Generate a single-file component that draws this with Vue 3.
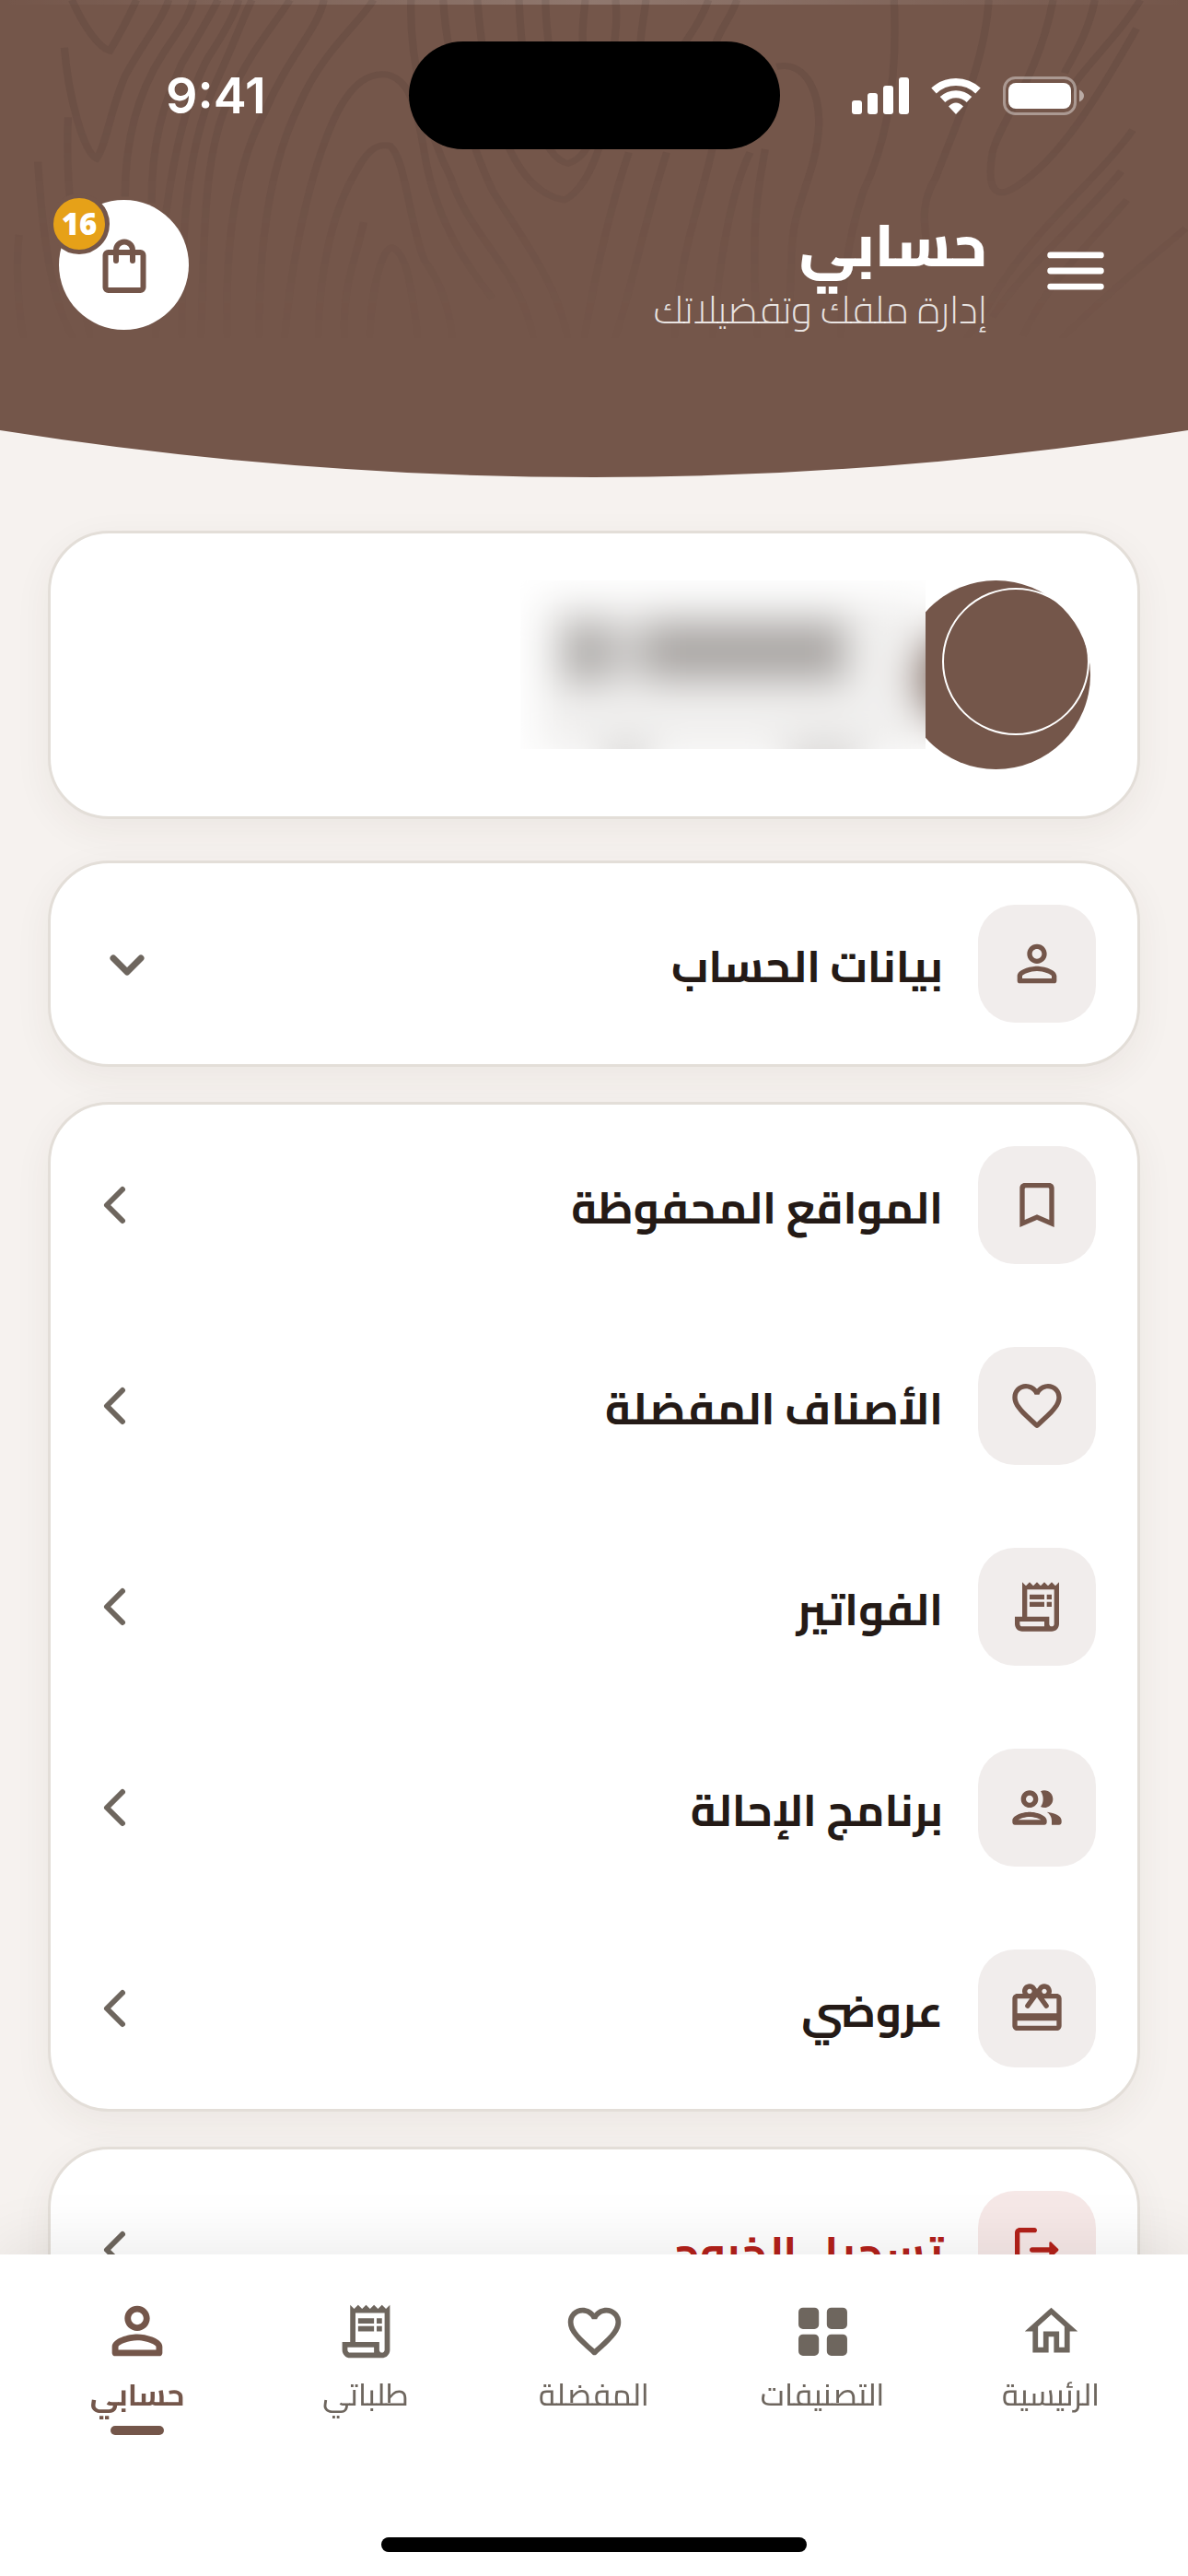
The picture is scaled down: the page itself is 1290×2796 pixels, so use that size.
<script setup>
import { ref } from "vue";

const cartCount = ref(16);
const activeTab = ref("account");
const detailsOpen = ref(false);

const icons = {
    person: "M12 4C9.79 4 8 5.79 8 8s1.79 4 4 4 4-1.79 4-4-1.79-4-4-4zm0 6c-1.1 0-2-.9-2-2s.9-2 2-2 2 .9 2 2-.9 2-2 2zm0 3c-2.67 0-8 1.34-8 4v2c0 .55.45 1 1 1h14c.55 0 1-.45 1-1v-2c0-2.66-5.33-4-8-4zm6 5H6v-.99c.2-.72 3.3-2.01 6-2.01s5.8 1.29 6 2v1z",
    bookmark: "M17 3H7c-1.1 0-2 .9-2 2v16l7-3 7 3V5c0-1.1-.9-2-2-2zm0 15l-5-2.18L7 18V5.500c0-.28.22-.5.5-.5h9c.28 0 .5.22.5.5V18z",
    heart: "M16.5 3c-1.74 0-3.41.81-4.5 2.09C10.91 3.81 9.24 3 7.5 3 4.42 3 2 5.42 2 8.500c0 3.78 3.4 6.86 8.55 11.54l.77.7c.38.34.98.34 1.36 0l.77-.71C18.6 15.36 22 12.28 22 8.500 22 5.42 19.58 3 16.5 3zm-4.4 15.55l-.1.1-.1-.1C7.14 14.24 4 11.39 4 8.500 4 6.500 5.500 5 7.500 5c1.54 0 3.04.99 3.57 2.36h1.87C13.46 5.99 14.96 5 16.500 5c2 0 3.500 1.500 3.500 3.500 0 2.89-3.14 5.74-7.9 10.05z",
    receipt: "M19.5 3.5L18 2l-1.5 1.5L15 2l-1.5 1.5L12 2l-1.5 1.5L9 2 7.5 3.5 6 2v14H3v3c0 1.66 1.34 3 3 3h12c1.66 0 3-1.34 3-3V2l-1.5 1.5zM15 20H6c-.55 0-1-.45-1-1v-1h10v2zm4-1c0 .55-.45 1-1 1s-1-.45-1-1v-3H8V5h11v14zM9 7h6v2H9zM16 7h2v2h-2zM9 10h6v2H9zM16 10h2v2h-2z",
    group: "M9 13.75c-2.34 0-7 1.17-7 3.5V18c0 .55.45 1 1 1h12c.55 0 1-.45 1-1v-.75c0-2.33-4.66-3.5-7-3.5zM4.34 17c.84-.58 2.87-1.25 4.66-1.25s3.82.67 4.66 1.25H4.34zM9 12c1.93 0 3.5-1.57 3.5-3.5S10.93 5 9 5 5.5 6.57 5.5 8.5 7.07 12 9 12zm0-5c.83 0 1.5.67 1.5 1.5S9.83 10 9 10s-1.5-.67-1.5-1.5S8.17 7 9 7zm7.04 6.81c1.16.84 1.96 1.96 1.96 3.44V19h3c.55 0 1-.45 1-1v-.75c0-2.02-3.5-3.17-5.96-3.44zM15 12c1.93 0 3.5-1.57 3.5-3.5S16.93 5 15 5c-.54 0-1.04.13-1.5.35.63.89 1 1.98 1 3.15s-.37 2.26-1 3.15c.46.22.96.35 1.5.35z",
    gift: "M20 6h-2.18c.11-.31.18-.65.18-1 0-1.66-1.34-3-3-3-1.05 0-1.96.54-2.5 1.35l-.5.67-.5-.68C10.96 2.54 10.05 2 9 2 7.34 2 6 3.34 6 5c0 .35.07.69.18 1H4c-1.11 0-1.99.89-1.99 2L2 19c0 1.11.89 2 2 2h16c1.11 0 2-.89 2-2V8c0-1.11-.89-2-2-2zm-5-2c.55 0 1 .45 1 1s-.45 1-1 1-1-.45-1-1 .45-1 1-1zM9 4c.55 0 1 .45 1 1s-.45 1-1 1-1-.45-1-1 .45-1 1-1zm11 15H4v-2h16v2zm0-5H4V8h5.08L7.400 10.300a1 1 0 0 0 1.600 1.200L12 7.400l3 4.100a1 1 0 0 0 1.600-1.200L14.920 8H20v6z",
    logout: "M5 5h6c.55 0 1-.45 1-1s-.45-1-1-1H5c-1.1 0-2 .9-2 2v14c0 1.1.9 2 2 2h6c.55 0 1-.45 1-1s-.45-1-1-1H5V5zM20.65 11.65l-2.79-2.79c-.32-.32-.86-.1-.86.35V11h-7c-.55 0-1 .45-1 1s.45 1 1 1h7v1.79c0 .45.54.67.85.35l2.79-2.79c.2-.19.2-.51.01-.7z",
    home: "M12 5.69l5 4.5V18h-2v-6H9v6H7v-7.81l5-4.5M12 3L2 12h3v8h6v-6h2v6h6v-8h3L12 3z",
    grid: "M4.500 3h4.300a1.700 1.700 0 0 1 1.700 1.700v4.700a1.700 1.700 0 0 1-1.700 1.700h-4.300a1.700 1.700 0 0 1-1.700-1.700V4.700A1.700 1.700 0 0 1 4.500 3zM15.200 3h4.300a1.700 1.700 0 0 1 1.700 1.700v4.700a1.700 1.700 0 0 1-1.700 1.700h-4.300a1.700 1.700 0 0 1-1.700-1.700V4.700A1.700 1.700 0 0 1 15.200 3zM4.500 13.100h4.300a1.700 1.700 0 0 1 1.700 1.700v4.700a1.700 1.700 0 0 1-1.700 1.700h-4.300a1.700 1.700 0 0 1-1.700-1.700v-4.700a1.700 1.700 0 0 1 1.700-1.700zM15.200 13.100h4.300a1.700 1.700 0 0 1 1.700 1.700v4.700a1.700 1.700 0 0 1-1.700 1.700h-4.300a1.700 1.700 0 0 1-1.700-1.700v-4.700a1.700 1.700 0 0 1 1.700-1.700z",
};

const menu = [
    { label: "المواقع المحفوظة", icon: "bookmark" },
    { label: "الأصناف المفضلة", icon: "heart" },
    { label: "الفواتير", icon: "receipt" },
    { label: "برنامج الإحالة", icon: "group" },
    { label: "عروضي", icon: "gift" },
];

const tabs = [
    { id: "home", label: "الرئيسية", icon: "home" },
    { id: "categories", label: "التصنيفات", icon: "grid" },
    { id: "favourites", label: "المفضلة", icon: "heart" },
    { id: "orders", label: "طلباتي", icon: "receipt" },
    { id: "account", label: "حسابي", icon: "person" },
];

// wood grain lines of the header
const grain = [
    "M190 0C220 80 260 150 290 160C310 120 345 40 360 0",
    "M170 150C180 300 220 480 255 500C280 460 290 350 330 240C380 130 430 60 445 0",
    "M180 370C170 600 200 800 240 1080",
    "M100 510C110 700 130 950 200 1080",
    "M50 740C40 850 50 1000 65 1080",
    "M330 620C330 420 370 280 430 170C480 80 500 50 510 0",
    "M400 640C400 450 430 330 480 200C540 80 560 40 575 0",
    "M410 1080C420 800 450 400 550 180C600 90 620 40 630 0",
    "M480 1080C480 800 480 500 570 260C620 130 640 60 665 0",
    "M530 1080C540 800 530 480 610 300C660 160 730 70 765 0",
    "M600 1080C590 700 640 480 700 350C760 180 840 90 855 0",
    "M685 1080C680 750 720 500 790 330C850 160 960 60 985 0",
    "M750 1080C770 800 820 540 880 380C930 250 980 230 1020 235C1080 250 1100 330 1120 480C1150 700 1240 850 1300 940",
    "M840 1080C840 850 880 660 940 540C980 450 1010 455 1030 460C1070 500 1080 700 1120 820C1170 900 1190 1000 1195 1080",
    "M910 1080C900 900 940 820 960 700",
    "M975 1080C980 900 1010 780 1035 780C1080 800 1090 950 1105 1080",
    "M1085 0C1080 200 1130 420 1190 560C1240 750 1380 850 1410 1080",
    "M1170 0C1180 200 1240 450 1300 600C1360 720 1480 900 1500 1080",
    "M1260 0C1280 300 1340 600 1490 630C1540 600 1580 500 1600 380",
    "M1370 0C1380 300 1430 500 1500 515C1540 500 1560 450 1570 400",
    "M1440 0C1440 60 1445 100 1450 160",
    "M1545 0C1540 60 1535 100 1540 160",
    "M1625 0C1630 60 1625 100 1620 160",
    "M1705 0C1700 60 1690 100 1690 160",
    "M1870 0C1840 100 1800 130 1790 180",
    "M1945 0C1930 60 1890 100 1880 180",
    "M1660 480C1620 620 1580 800 1540 1080",
    "M1760 480C1700 700 1670 900 1620 1080",
    "M1880 470C1850 640 1790 800 1780 1080",
    "M1980 480C1930 600 1900 800 1880 1080",
    "M2020 470C2000 600 1980 700 2000 1080",
    "M2050 210C2130 190 2170 300 2160 420C2150 560 2090 650 2090 800L2080 1080",
    "M2360 0C2370 250 2340 450 2280 600C2240 740 2220 900 2220 1080",
    "M2610 0C2600 200 2520 400 2470 560C2430 640 2440 700 2445 760",
    "M2780 0C2740 250 2640 380 2620 480C2600 620 2640 620 2680 590C2800 500 2900 300 3000 90",
    "M2890 0C2870 120 2820 200 2810 230",
    "M3010 0C2950 120 2850 220 2800 330",
    "M2990 410C2900 560 2750 700 2640 900C2600 980 2560 1060 2540 1080",
    "M2960 540C2850 700 2700 850 2620 1000",
    "M2975 630C2850 800 2760 900 2700 1060",
    "M3130 720C3000 850 2900 950 2800 1070",
];
</script>

<template>
    <div class="screen" dir="rtl">
        <header class="header">
            <svg class="grain" viewBox="0 0 3136 1080" preserveAspectRatio="none" aria-hidden="true">
                <path v-for="line in grain" :key="line" :d="line" />
            </svg>
            <svg class="curve" viewBox="0 0 1290 51" preserveAspectRatio="none" aria-hidden="true">
                <path d="M0 0Q645 102 1290 0Z" />
            </svg>

            <div class="status" dir="ltr">
                <span class="time">9:41</span>
                <div class="island"></div>
                <div class="signals">
                    <svg width="62" height="42" viewBox="0 0 62 42">
                        <rect x="0" y="26" width="11" height="15" rx="3" />
                        <rect x="17" y="18" width="11" height="23" rx="3" />
                        <rect x="34" y="10" width="11" height="31" rx="3" />
                        <rect x="51" y="1" width="11" height="40" rx="3" />
                    </svg>
                    <svg width="54" height="42" viewBox="0 0 54 42">
                        <g class="waves">
                            <path d="M3 15.500A35 35 0 0 1 51 15.500" />
                            <path d="M12.500 25A21 21 0 0 1 41.500 25" />
                        </g>
                        <path d="M27 41L19 32.500Q27 24.500 35 32.500Z" />
                    </svg>
                    <svg width="88" height="42" viewBox="0 0 88 42">
                        <rect class="shell" x="1.500" y="1.500" width="77" height="39" rx="12" />
                        <rect x="6" y="7" width="68" height="28" rx="8" />
                        <path class="cap" d="M83 14.500Q88 17 88 21T83 27.500Z" />
                    </svg>
                </div>
            </div>

            <div class="toolbar">
                <button class="menu-button" aria-label="القائمة">
                    <svg viewBox="0 0 24 24"><path d="M4 7h16M4 12h16M4 17h16" /></svg>
                </button>
                <div class="heading">
                    <h1>حسابي</h1>
                    <p>إدارة ملفك وتفضيلاتك</p>
                </div>
                <button class="cart" aria-label="السلة">
                    <svg viewBox="0 0 70 70">
                        <rect x="14.500" y="21" width="41" height="41" rx="3" />
                        <path d="M26 30V18.500a9 9 0 0 1 18 0V30" />
                    </svg>
                    <span class="badge">{{ cartCount }}</span>
                </button>
            </div>
        </header>

        <main class="content">
            <section class="card profile">
                <svg class="avatar" viewBox="0 0 205 205" aria-hidden="true">
                    <circle class="disc" cx="102.500" cy="102.500" r="102.500" />
                    <circle class="ring" cx="124" cy="88" r="79" />
                </svg>
                <svg class="hidden-name" viewBox="0 0 440 183" aria-hidden="true">
                    <defs>
                        <filter id="soft" x="-50%" y="-100%" width="200%" height="300%">
                            <feGaussianBlur stdDeviation="21" />
                        </filter>
                    </defs>
                    <rect class="paper" width="440" height="183" />
                    <g filter="url(#soft)">
                        <rect x="20" y="20" width="420" height="170" fill="#f1f0ef" />
                        <rect x="44" y="42" width="52" height="72" fill="#b0adab" />
                        <rect x="96" y="46" width="40" height="64" fill="#cfcdcc" />
                        <rect x="136" y="42" width="220" height="70" fill="#aca8a6" />
                        <rect x="90" y="170" width="50" height="50" fill="#dddbda" />
                        <rect x="290" y="170" width="80" height="50" fill="#dddbda" />
                        <ellipse cx="476" cy="106" rx="50" ry="56" fill="#8c7368" />
                    </g>
                </svg>
            </section>

            <section class="card details">
                <button class="row" :aria-expanded="detailsOpen" @click="detailsOpen = !detailsOpen">
                    <span class="tile"><svg viewBox="0 0 24 24"><path :d="icons.person" /></svg></span>
                    <span class="label">بيانات الحساب</span>
                    <svg class="down" viewBox="0 0 75 75"><path d="M23 31l15 15 15-15" /></svg>
                </button>
            </section>

            <nav class="card">
                <a v-for="item in menu" :key="item.icon" class="row" href="#">
                    <span class="tile"><svg viewBox="0 0 24 24"><path :d="icons[item.icon]" /></svg></span>
                    <span class="label">{{ item.label }}</span>
                    <svg class="chevron" viewBox="0 0 48 48"><path d="M33 7L16 24l17 17" /></svg>
                </a>
            </nav>

            <section class="card">
                <button class="row danger">
                    <span class="tile"><svg viewBox="0 0 24 24"><path :d="icons.logout" /></svg></span>
                    <span class="label">تسجيل الخروج</span>
                    <svg class="chevron" viewBox="0 0 48 48"><path d="M33 7L16 24l17 17" /></svg>
                </button>
            </section>
        </main>

        <nav class="tabbar">
            <div class="tabs">
                <a
                    v-for="tab in tabs"
                    :key="tab.id"
                    href="#"
                    class="tab"
                    :class="{ active: tab.id === activeTab }"
                    @click.prevent="activeTab = tab.id"
                >
                    <span class="tab-icon"><svg viewBox="0 0 24 24"><path :d="icons[tab.icon]" /></svg></span>
                    <span class="tab-label">{{ tab.label }}</span>
                </a>
            </div>
            <div class="home-indicator"></div>
        </nav>
    </div>
</template>

<style>
body {
  margin: 0;
  background-color: #f6f2ef;
}
</style>

<style scoped>
.screen {
  height: 100vh;
  overflow: hidden;
  background-color: #f6f2ef;
  font-family: Cairo, "DejaVu Sans Condensed", "DejaVu Sans", sans-serif;
  color: #241a16;
}

button {
  border: none;
  background: none;
  padding: 0;
  font: inherit;
  color: inherit;
  cursor: pointer;
}

a {
  color: inherit;
  text-decoration: none;
}

svg {
  display: block;
  flex-shrink: 0;
}

.header {
  position: relative;
  height: 467px;
  margin-bottom: 109px;
  background-color: #74564a;
  color: white;
}

.header::before {
  content: "";
  position: absolute;
  top: 0;
  width: 100%;
  height: 5px;
  background: linear-gradient(to right, transparent, rgba(255, 255, 255, 0.2), transparent);
}

.grain {
  position: absolute;
  top: 0;
  width: 100%;
  height: 372px;
  fill: none;
  stroke: rgba(40, 30, 26, 0.1);
  stroke-width: 20px;
  mask-image: linear-gradient(black 30%, transparent);
}

.curve {
  position: absolute;
  top: 100%;
  width: 100%;
  height: 51px;
  fill: #74564a;
}

.status {
  position: relative;
  display: grid;
  grid-template-columns: 1fr 403px 1fr;
  align-items: center;
  padding-top: 45px;
}

.time {
  padding-left: 180px;
  font-family: Inter, sans-serif;
  font-size: 54px;
  font-weight: 600;
}

.island {
  height: 117px;
  border-radius: 59px;
  background-color: black;
}

.signals {
  display: flex;
  justify-content: flex-end;
  gap: 24px;
  padding-right: 113px;
  fill: white;
}

.waves {
  fill: none;
  stroke: white;
  stroke-width: 8px;
}

.shell {
  fill: none;
  stroke: rgba(255, 255, 255, 0.4);
  stroke-width: 3px;
}

.cap {
  fill: rgba(255, 255, 255, 0.5);
}

.toolbar {
  position: relative;
  display: flex;
  align-items: flex-start;
  padding: 55px 81px 0 64px;
}

.menu-button {
  padding-top: 36px;
}

.menu-button svg {
  width: 82px;
  height: 82px;
  fill: none;
  stroke: white;
  stroke-width: 2;
  stroke-linecap: round;
}

.heading {
  flex: 1;
  margin-right: 55px;
}

h1 {
  margin: 0;
  font-size: 64px;
  font-weight: 800;
  line-height: 98px;
}

.heading p {
  margin: 0;
  font-size: 42px;
  font-weight: 300;
  line-height: 42px;
  color: rgba(255, 255, 255, 0.85);
}

.cart {
  position: relative;
  display: flex;
  align-items: center;
  justify-content: center;
  width: 141px;
  height: 141px;
  border-radius: 50%;
  background-color: white;
}

.cart svg {
  width: 70px;
  height: 70px;
  fill: none;
  stroke: #74564a;
  stroke-width: 6;
  stroke-linecap: round;
}

.badge {
  position: absolute;
  top: -7px;
  left: -11px;
  width: 56px;
  height: 56px;
  border: 5px solid #74564a;
  border-radius: 50%;
  background-color: #e6a118;
  color: white;
  font-family: "Open Sans", sans-serif;
  font-size: 33px;
  font-weight: 800;
  line-height: 56px;
  text-align: center;
}

.content {
  display: flex;
  flex-direction: column;
  gap: 38px;
  padding: 0 52px;
}

.card {
  border: 3px solid #e3ded8;
  border-radius: 66px;
  background-color: white;
  box-shadow: 0 12px 42px rgba(60, 50, 40, 0.06);
}

.profile {
  display: flex;
  padding: 51px;
  margin-bottom: 7px;
}

.avatar {
  width: 205px;
  height: 205px;
}

.disc {
  fill: #74564a;
}

.ring {
  fill: none;
  stroke: white;
  stroke-width: 2;
}

.hidden-name {
  z-index: 1;
  width: 440px;
  height: 183px;
  margin-right: -26px;
}

.paper {
  fill: white;
}

.row {
  display: flex;
  align-items: center;
  width: 100%;
  box-sizing: border-box;
  padding: 45px;
  text-align: right;
}

.tile {
  display: flex;
  align-items: center;
  justify-content: center;
  width: 128px;
  height: 128px;
  border-radius: 40px;
  background-color: #f1edec;
}

.tile svg {
  width: 64px;
  height: 64px;
  fill: #74564a;
}

.label {
  flex: 1;
  margin-right: 38px;
  padding-top: 4px;
  font-size: 48px;
  font-weight: 700;
  line-height: 90px;
}

.chevron,
.down {
  width: 48px;
  height: 48px;
  fill: none;
  stroke: #6e665e;
  stroke-width: 6;
  stroke-linecap: round;
  stroke-linejoin: round;
}

.down {
  width: 75px;
  height: 75px;
  stroke-width: 7;
}

.danger {
  color: #b3211a;
}

.danger .tile {
  background-color: #f6e8e7;
}

.danger .tile svg {
  fill: #b3211a;
}

.tabbar {
  position: fixed;
  bottom: 0;
  left: 0;
  right: 0;
  z-index: 2;
  display: flex;
  flex-direction: column;
  justify-content: space-between;
  align-items: center;
  height: 349px;
  background-color: white;
  box-shadow: 0 -12px 60px rgba(0, 0, 0, 0.08);
}

.tabs {
  display: grid;
  grid-template-columns: repeat(5, 1fr);
  width: 100%;
  box-sizing: border-box;
  padding: 41px 25px 0;
}

.tab {
  display: flex;
  flex-direction: column;
  align-items: center;
  color: #6e665e;
}

.tab-icon {
  display: flex;
  align-items: center;
  height: 84px;
}

.tab-icon svg {
  width: 69px;
  height: 69px;
  fill: currentColor;
}

.tab-label {
  font-size: 33px;
  font-weight: 500;
  line-height: 54px;
}

.active {
  color: #74564a;
}

.active .tab-icon svg {
  width: 82px;
  height: 82px;
}

.active .tab-label {
  font-weight: 700;
}

.active::after {
  content: "";
  width: 58px;
  height: 10px;
  margin-top: 7px;
  border-radius: 5px;
  background-color: #74564a;
}

.home-indicator {
  width: 462px;
  height: 16px;
  margin-bottom: 26px;
  border-radius: 8px;
  background-color: black;
}
</style>
